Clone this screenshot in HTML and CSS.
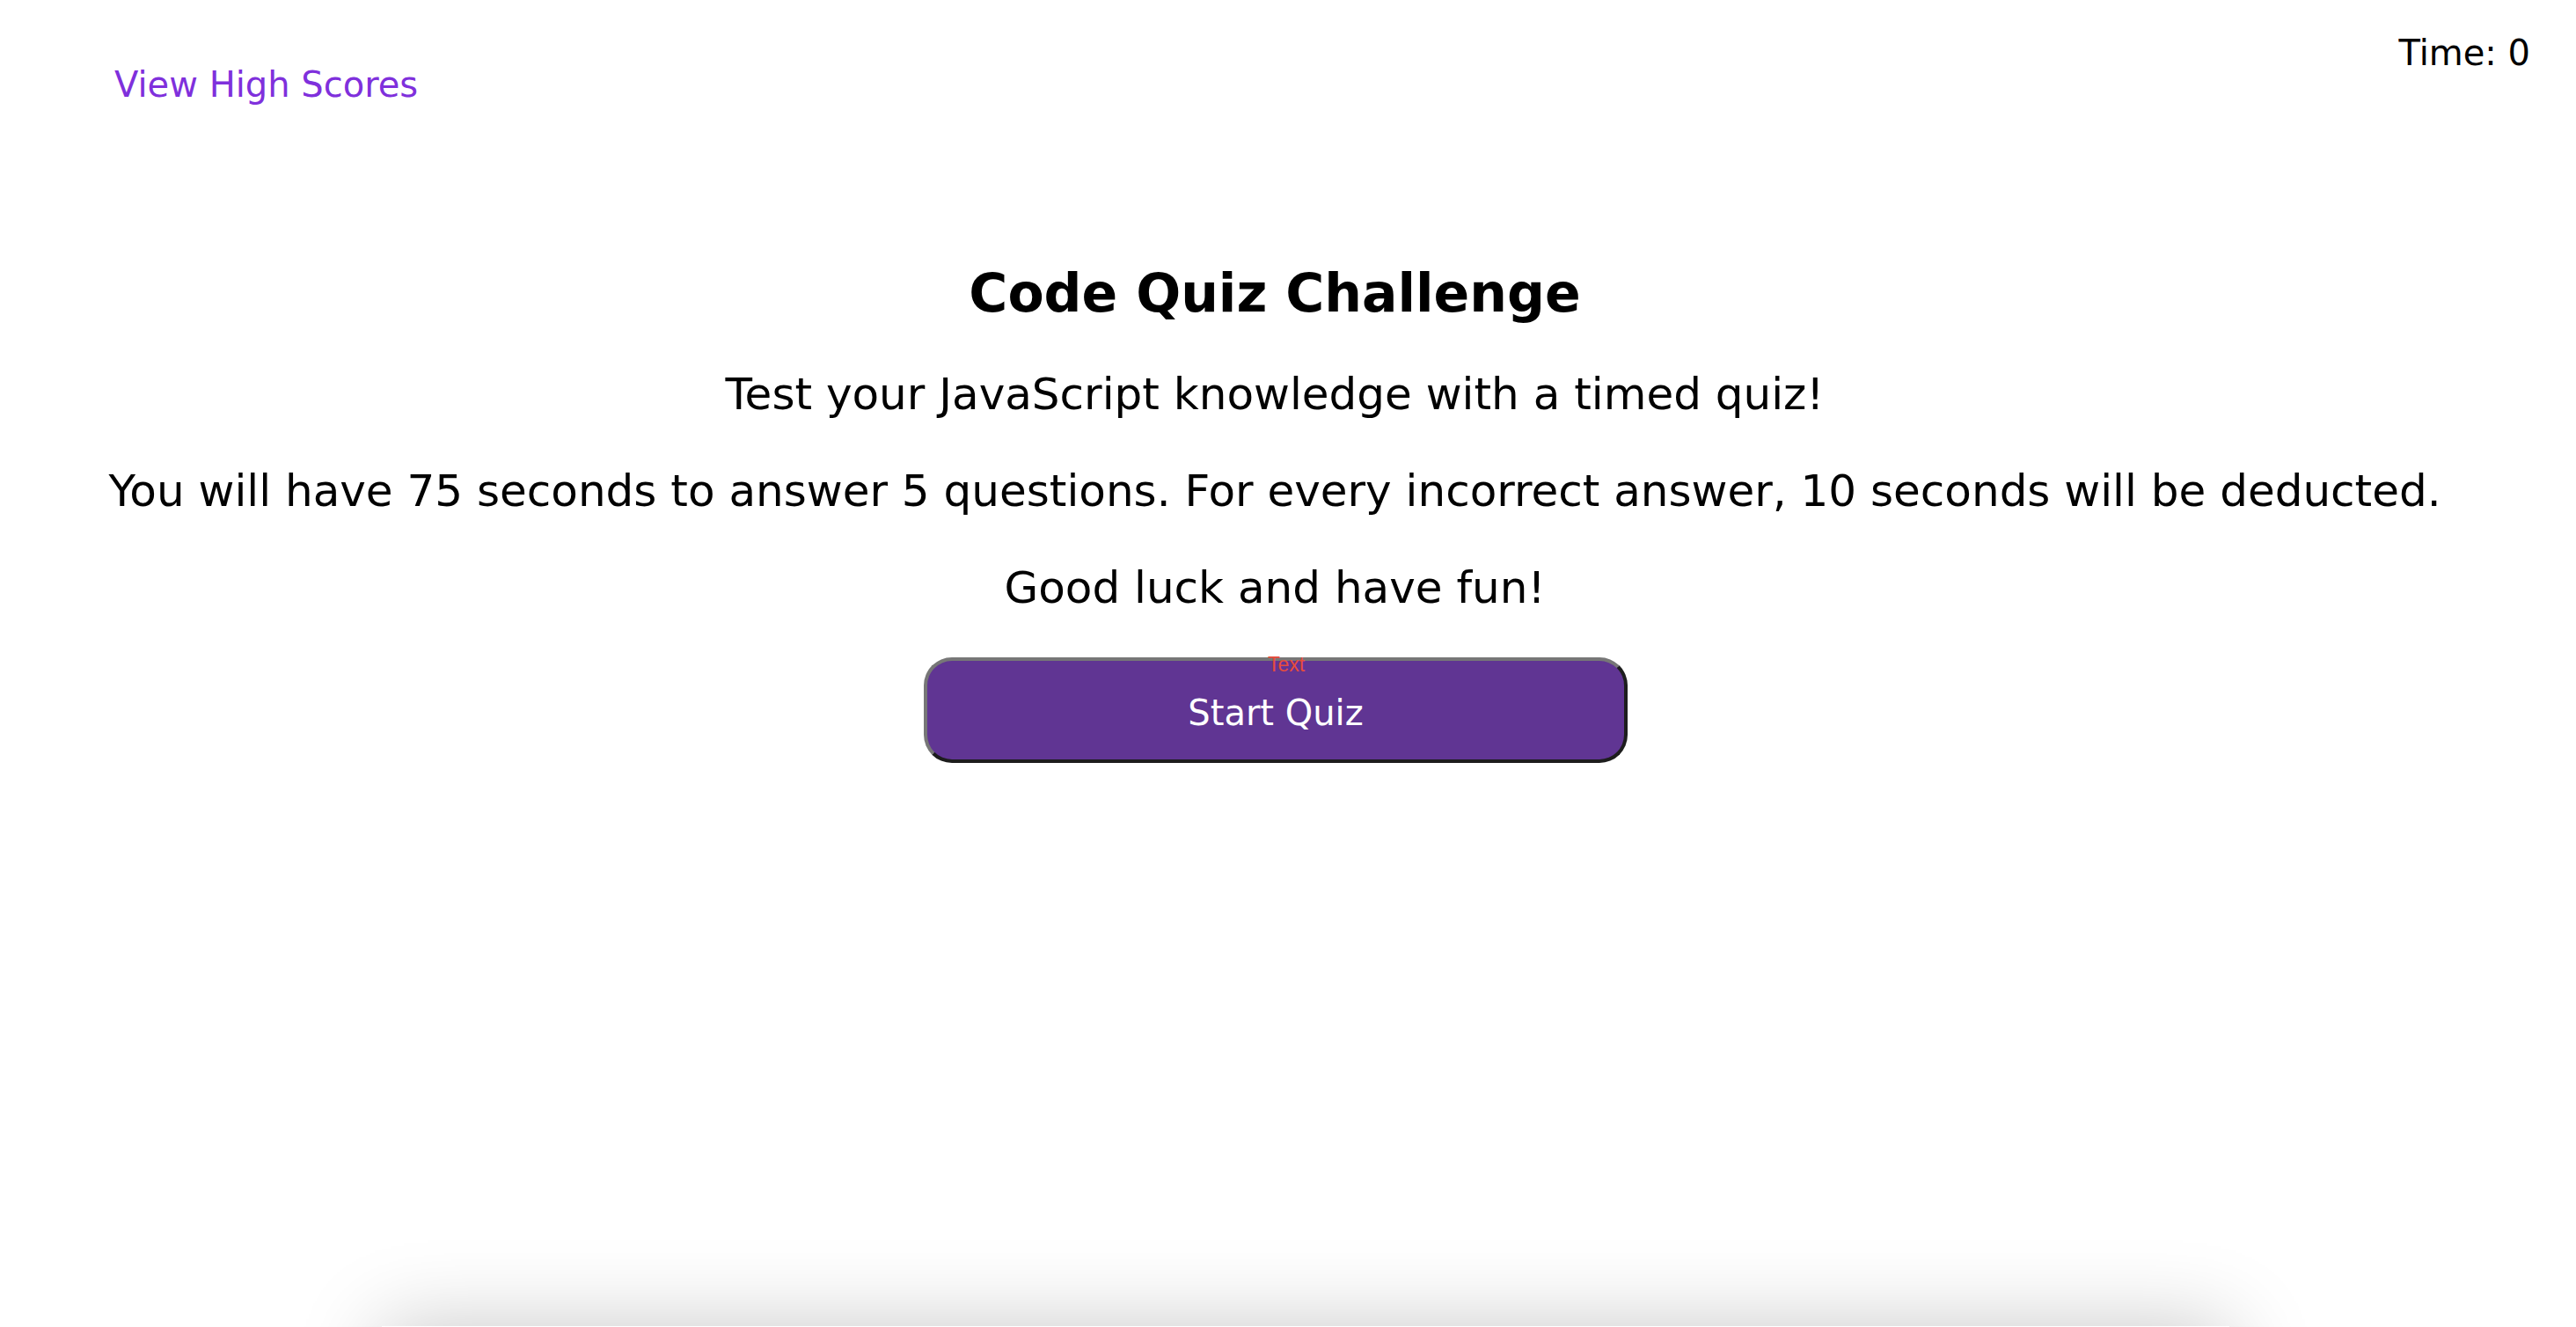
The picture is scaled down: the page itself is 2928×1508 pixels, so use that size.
FILE: index.html
```html
<!DOCTYPE html>
<html lang="en">
<head>
<meta charset="utf-8">
<title>Code Quiz</title>
<link rel="stylesheet" href="styles.css">
</head>
<body>
<header class="topbar">
  <a class="scores-link" href="#">View High Scores</a>
  <div class="timer">Time: <span class="timer-value">0</span></div>
</header>
<main class="intro">
  <h1 class="intro-title">Code Quiz Challenge</h1>
  <p class="intro-text">Test your JavaScript knowledge with a timed quiz!</p>
  <p class="intro-text">You will have 75 seconds to answer 5 questions. For every incorrect answer, 10 seconds will be deducted.</p>
  <p class="intro-text">Good luck and have fun!</p>
  <div class="start-wrap">
    <button class="start-btn" type="button">Start Quiz</button>
    <span class="start-label">Text</span>
  </div>
</main>
<section class="quiz-card"></section>
</body>
</html>
```
FILE: styles.css
```css
html, body {
  margin: 0;
  padding: 0;
  overflow: hidden;
  background: #ffffff;
}

body {
  font-family: "DejaVu Sans", Verdana, sans-serif;
  color: #000000;
  font-size: 40px;
}

.topbar {
  display: flex;
  justify-content: space-between;
  align-items: flex-start;
  height: 121px;
}

.scores-link {
  margin-top: 73px;
  margin-left: 130px;
  line-height: 47px;
  color: #7f30dc;
  text-decoration: none;
  font-size: 40px;
}

.timer {
  margin-top: 37px;
  margin-right: 52px;
  line-height: 47px;
  font-size: 40px;
}

.intro {
  display: flex;
  flex-direction: column;
  align-items: center;
  padding-top: 177px;
  padding-right: 30px;
  text-align: center;
}

.intro-title {
  margin: 0 0 50px;
  font-size: 60px;
  line-height: 70px;
  font-weight: bold;
}

.intro-text {
  margin: 0 0 50px;
  font-size: 50px;
  line-height: 60px;
}

.start-wrap {
  position: relative;
  width: 800px;
  height: 120px;
  margin-top: -1px;
  margin-left: 2px;
}

.start-btn {
  box-sizing: border-box;
  width: 800px;
  height: 120px;
  border: 4px solid;
  border-color: #777777 #1d1d1d #1d1d1d #777777;
  border-radius: 32px;
  background: #603593;
  color: #ffffff;
  font-family: "DejaVu Sans", Verdana, sans-serif;
  font-size: 40px;
  padding: 5px 0 0;
  cursor: pointer;
}

.start-label {
  position: absolute;
  top: -5px;
  left: 391px;
  font-family: "Liberation Sans", Arial, sans-serif;
  font-size: 23px;
  line-height: 26px;
  color: #e74c3c;
}

.quiz-card {
  width: 2100px;
  height: 400px;
  margin: 640px 0 0 434px;
  background: #ffffff;
  box-shadow: 0 0 90px rgba(0, 0, 0, 0.22);
}
```
